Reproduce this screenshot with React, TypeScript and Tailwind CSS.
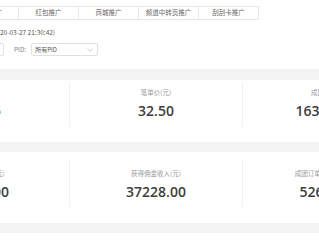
const TABS = ['首页推广', '红包推广', '商城推广', '频道中转页推广', '刮刮卡推广'];

const ROWS = [
  {
    h: 'h-[62px]',
    col: 'mt-[2px] h-[45px] pt-[6px]',
    items: [
      { label: '推广订单数', value: '26.25' },
      { label: '笔单价(元)', value: '32.50' },
      { label: '成团金额(元)', value: '163980.00' },
    ],
  },
  {
    h: 'h-[71px]',
    col: 'mt-[8px] h-[47px] pt-[9px]',
    items: [
      { label: '预估总收入(元)', value: '8600.00' },
      { label: '获得佣金收入(元)', value: '37228.00' },
      { label: '成团订单的佣金收入(元)', value: '52680.00' },
    ],
  },
  {
    h: 'h-[71px]',
    col: 'mt-[8px] h-[47px] pt-[9px]',
    items: [
      { label: '订单数', value: '120' },
      { label: '佣金(元)', value: '0.00' },
      { label: '收入(元)', value: '0.00' },
    ],
  },
];

export default function App() {
  return (
    <div className="w-[319px] h-[240px] overflow-hidden bg-[#f3f3f3] font-['Noto_Sans_CJK_SC',sans-serif]">
      {/* top filter area */}
      <div className="bg-white h-[69px] pt-[6px]">
        <div className="flex -ml-[41px]">
          {TABS.map((t, i) => (
            <div
              key={t}
              className={`w-[60px] h-[14px] shrink-0 flex items-center justify-center border-y border-r border-[#e8e8e8] text-[6.5px] text-[#666] whitespace-nowrap ${
                i === 0 ? 'border-l' : ''
              }`}
            >
              {t}
            </div>
          ))}
        </div>

        <div className="mt-[8px] flex text-[6.5px] leading-[9px] text-[#555] whitespace-nowrap">
          <span className="-ml-[80px] w-[80px] shrink-0 text-right">数据更新时间(20</span>
          <span>20-03-27 21:30:42)</span>
        </div>

        <div className="mt-[6px] flex items-center">
          <div className="-ml-[56px] w-[60px] h-[13px] shrink-0 border border-[#e0e0e0] rounded-[2px]" />
          <span className="ml-[10px] text-[6.5px] text-[#888]">PID:</span>
          <div className="ml-[5px] w-[67px] h-[13px] border border-[#e0e0e0] rounded-[2px] flex items-center justify-between px-[3px]">
            <span className="text-[6px] text-[#555]">所有PID</span>
            <svg width="6" height="4" viewBox="0 0 6 4" className="mr-[1px]">
              <path d="M0.5 0.8 L3 3.2 L5.5 0.8" fill="none" stroke="#bbb" strokeWidth="0.8" />
            </svg>
          </div>
        </div>
      </div>

      {/* stats */}
      <div className="pt-[11px] flex flex-col gap-[10px]">
        {ROWS.map((row, r) => (
          <div key={r} className={`bg-white ${row.h} flex -ml-[103px]`}>
            {row.items.map((it, i) => (
              <div
                key={it.label}
                className={`w-[173px] shrink-0 ${row.col} flex flex-col items-center ${
                  i < 2 ? 'border-r border-[#f0f0f0]' : ''
                }`}
              >
                <div className="text-[6.5px] leading-[9px] text-[#999] whitespace-nowrap">{it.label}</div>
                <div className="mt-[6px] text-[14px] leading-[16px] font-semibold text-[#3d3d3d] font-['Open_Sans',sans-serif]">
                  {it.value}
                </div>
              </div>
            ))}
          </div>
        ))}
      </div>
    </div>
  );
}
